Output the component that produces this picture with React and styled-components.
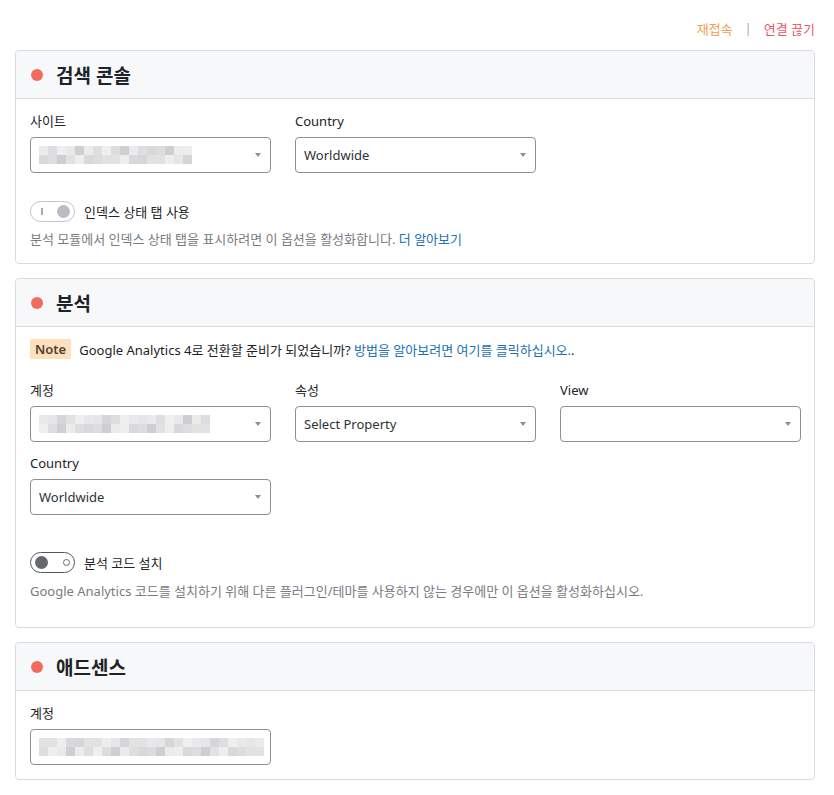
import React from "react";
import styled, { createGlobalStyle } from "styled-components";

const Global = createGlobalStyle`
  body { margin: 0; background: #fff; font-family: "Noto Sans", "Noto Sans CJK KR", sans-serif; color: #1d2327; }
  * { box-sizing: border-box; }
`;

const Page = styled.div`
  padding: 14px 19px 16px 15px;
  display: flex;
  flex-direction: column;
`;

const TopBar = styled.div`
  display: flex;
  justify-content: flex-end;
  align-items: center;
  gap: 10px;
  font-size: 13px;
  height: 28px;
  margin-bottom: 8px;
`;

const TopLink = styled.a`
  color: ${(p) => p.$color};
  text-decoration: none;
`;

const Sep = styled.span`
  color: #a7aaad;
  margin: 0 2px;
`;

const Card = styled.section`
  border: 1px solid #dcdcde;
  border-radius: 4px;
  background: #fff;
  margin-bottom: 14px;
`;

const CardHeader = styled.div`
  height: 48px;
  background: #f7f8fa;
  border-bottom: 1px solid #dcdcde;
  display: flex;
  align-items: center;
  padding-left: 15px;
  gap: 13px;
  border-radius: 4px 4px 0 0;
`;

const Dot = styled.span`
  width: 12px;
  height: 12px;
  border-radius: 50%;
  background: #ef6c5e;
`;

const Title = styled.h2`
  margin: 0;
  font-size: 19px;
  font-weight: 700;
  color: #1d2327;
`;

const CardBody = styled.div`
  padding: ${(p) => p.$pad || "12px 14px 14px 14px"};
  display: flex;
  flex-direction: column;
`;

const Row = styled.div`
  display: grid;
  grid-template-columns: repeat(3, 241px);
  column-gap: 24px;
  margin-bottom: ${(p) => p.$mb || 0}px;
`;

const Field = styled.div`
  display: flex;
  flex-direction: column;
`;

const Label = styled.label`
  font-size: 13px;
  line-height: 18px;
  margin-bottom: 7px;
  color: #1d2327;
`;

const Select = styled.div`
  height: 36px;
  border: 1px solid #8c8f94;
  border-radius: 4px;
  display: flex;
  align-items: center;
  padding: 0 8px;
  font-size: 13px;
  color: #2c3338;
  position: relative;
  background: #fff;
`;

const Caret = styled.span`
  position: absolute;
  right: 9px;
  top: 15px;
  width: 0;
  height: 0;
  border-left: 3px solid transparent;
  border-right: 3px solid transparent;
  border-top: 4px solid #8c8f94;
`;

const Blur = styled.div`
  display: grid;
  grid-template-columns: repeat(${(p) => p.$cols}, 9px);
  grid-auto-rows: 9px;
`;

const Cell = styled.span`
  display: block;
`;

const ToggleRow = styled.div`
  display: flex;
  align-items: center;
  gap: 9px;
  font-size: 13px;
  margin-top: ${(p) => p.$mt}px;
`;

const Toggle = styled.span`
  width: 45px;
  height: 21px;
  border: 1px solid ${(p) => (p.$dark ? "#50575e" : "#c3c4c7")};
  border-radius: 11px;
  display: flex;
  align-items: center;
  justify-content: space-between;
  padding: 0 4px 0 ${(p) => (p.$dark ? 4 : 10)}px;
  background: #fff;
`;

const Knob = styled.span`
  width: ${(p) => p.$size}px;
  height: ${(p) => p.$size}px;
  border-radius: 50%;
  background: ${(p) => p.$bg};
  border: ${(p) => p.$border || "none"};
`;

const Bar = styled.span`
  width: 2px;
  height: 7px;
  background: #a7aaad;
`;

const Desc = styled.p`
  margin: ${(p) => p.$mt}px 0 0;
  font-size: 13px;
  color: #787c82;
  line-height: 18px;
`;

const Link = styled.a`
  color: #2271b1;
  text-decoration: none;
`;

const NoteLine = styled.div`
  display: flex;
  align-items: center;
  gap: 8px;
  font-size: 13px;
  margin-bottom: 22px;
  color: #1d2327;
`;

const NoteBadge = styled.span`
  background: #fde1bd;
  color: #50402c;
  font-weight: 600;
  padding: 0 5px;
  height: 20px;
  line-height: 20px;
  border-radius: 2px;
`;

const shades = ["#e9e8ea", "#dedcde", "#d5d6d9", "#ecebec", "#e2e1e3", "#f0efef", "#d9d8da", "#e6e5e7", "#cfcfd1", "#e4e2df", "#dcdee2", "#eeeeee"];

function Blurred({ cols, seed }) {
  const cells = [];
  for (let i = 0; i < cols * 2; i++) {
    cells.push(shades[(i * 7 + seed * 3 + (i >> 2)) % shades.length]);
  }
  return (
    <Blur $cols={cols}>
      {cells.map((c, i) => (
        <Cell key={i} style={{ background: c }} />
      ))}
    </Blur>
  );
}

function SelectBox({ children, caret = true }) {
  return (
    <Select>
      {children}
      {caret && <Caret />}
    </Select>
  );
}

export default function App() {
  return (
    <>
      <Global />
      <Page>
        <TopBar>
          <TopLink $color="#f2a154">재접속</TopLink>
          <Sep>|</Sep>
          <TopLink $color="#e8566b">연결 끊기</TopLink>
        </TopBar>

        <Card>
          <CardHeader>
            <Dot />
            <Title>검색 콘솔</Title>
          </CardHeader>
          <CardBody $pad="13px 14px 15px 14px">
            <Row>
              <Field>
                <Label>사이트</Label>
                <SelectBox>
                  <Blurred cols={17} seed={1} />
                </SelectBox>
              </Field>
              <Field>
                <Label>Country</Label>
                <SelectBox>Worldwide</SelectBox>
              </Field>
            </Row>
            <ToggleRow $mt={28}>
              <Toggle>
                <Bar />
                <Knob $size={13} $bg="#b9bec5" />
              </Toggle>
              <span>인덱스 상태 탭 사용</span>
            </ToggleRow>
            <Desc $mt={8}>
              분석 모듈에서 인덱스 상태 탭을 표시하려면 이 옵션을 활성화합니다. <Link>더 알아보기</Link>
            </Desc>
          </CardBody>
        </Card>

        <Card>
          <CardHeader>
            <Dot />
            <Title>분석</Title>
          </CardHeader>
          <CardBody $pad="12px 14px 27px 14px">
            <NoteLine>
              <NoteBadge>Note</NoteBadge>
              <span>
                Google Analytics 4로 전환할 준비가 되었습니까? <Link>방법을 알아보려면 여기를 클릭하십시오.</Link>.
              </span>
            </NoteLine>
            <Row $mb={12}>
              <Field>
                <Label>계정</Label>
                <SelectBox>
                  <Blurred cols={19} seed={4} />
                </SelectBox>
              </Field>
              <Field>
                <Label>속성</Label>
                <SelectBox>Select Property</SelectBox>
              </Field>
              <Field>
                <Label>View</Label>
                <SelectBox />
              </Field>
            </Row>
            <Row>
              <Field>
                <Label>Country</Label>
                <SelectBox>Worldwide</SelectBox>
              </Field>
            </Row>
            <ToggleRow $mt={37}>
              <Toggle $dark>
                <Knob $size={13} $bg="#646970" />
                <Knob $size={7} $bg="#fff" $border="1.5px solid #646970" />
              </Toggle>
              <span>분석 코드 설치</span>
            </ToggleRow>
            <Desc $mt={9}>
              Google Analytics 코드를 설치하기 위해 다른 플러그인/테마를 사용하지 않는 경우에만 이 옵션을 활성화하십시오.
            </Desc>
          </CardBody>
        </Card>

        <Card>
          <CardHeader>
            <Dot />
            <Title>애드센스</Title>
          </CardHeader>
          <CardBody $pad="13px 14px 14px 14px">
            <Row>
              <Field>
                <Label>계정</Label>
                <SelectBox caret={false}>
                  <Blurred cols={25} seed={7} />
                </SelectBox>
              </Field>
            </Row>
          </CardBody>
        </Card>
      </Page>
    </>
  );
}
